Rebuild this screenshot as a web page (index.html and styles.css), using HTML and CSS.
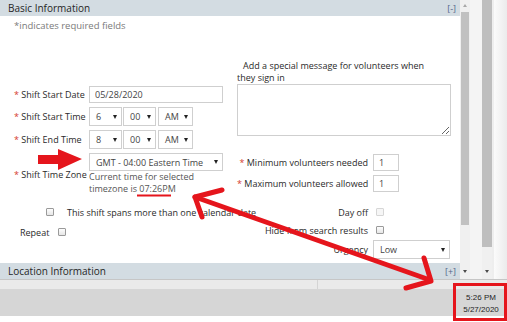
FILE: index.html
```html
<!DOCTYPE html>
<html lang="en">
<head>
    <meta charset="UTF-8">
    <title>Shift Details</title>
    <link rel="stylesheet" href="styles.css">
</head>
<body>
<div class="screen">
    <div class="window">
        <!-- Dialog panel -->
        <div class="panel">
            <div class="section-head"><span>Basic Information</span><span class="toggle">[-]</span></div>

            <div class="form-body">
                <p class="note">*indicates required fields</p>

                <div class="upper">
                    <!-- Left: date / time fields -->
                    <div class="fields">
                        <label class="lbl"><span class="req">*</span> Shift Start Date</label>
                        <input class="text wide" type="text" value="05/28/2020">

                        <label class="lbl"><span class="req">*</span> Shift Start Time</label>
                        <div class="time">
                            <div class="select small"><span>6</span><i class="caret"></i></div>
                            <div class="select small"><span>00</span><i class="caret"></i></div>
                            <div class="select small ampm"><span>AM</span><i class="caret"></i></div>
                        </div>

                        <label class="lbl"><span class="req">*</span> Shift End Time</label>
                        <div class="time">
                            <div class="select small"><span>8</span><i class="caret"></i></div>
                            <div class="select small"><span>00</span><i class="caret"></i></div>
                            <div class="select small ampm"><span>AM</span><i class="caret"></i></div>
                        </div>

                        <label class="lbl"><span class="req">*</span> Shift Time Zone</label>
                        <div class="tz">
                            <div class="select zone"><span>GMT - 04:00 Eastern Time</span><i class="caret"></i></div>
                            <div class="hint">Current time for selected<br>timezone is 07:26PM</div>
                        </div>
                    </div>

                    <!-- Right: message and volunteer counts -->
                    <div class="extras">
                        <label class="msg-label">Add a special message for volunteers when they sign in</label>
                        <textarea class="msg"></textarea>
                        <div class="counts">
                            <label><span class="req">*</span> Minimum volunteers needed</label>
                            <input class="text num" type="text" value="1">
                            <label><span class="req">*</span> Maximum volunteers allowed</label>
                            <input class="text num" type="text" value="1">
                        </div>
                    </div>
                </div>

                <div class="lower">
                    <div class="lower-left">
                        <div class="span-row"><input class="check" type="checkbox"><span>This shift spans more than one calendar date</span></div>
                        <div class="repeat-row"><span>Repeat</span><input class="check" type="checkbox"></div>
                    </div>
                    <div class="lower-right">
                        <label>Day off</label>
                        <div><input class="check off" type="checkbox" disabled></div>
                        <label>Hide from search results</label>
                        <div><input class="check" type="checkbox"></div>
                        <label>Urgency</label>
                        <div class="select urgency"><span>Low</span><i class="caret"></i></div>
                    </div>
                </div>
            </div>

            <div class="section-head"><span>Location Information</span><span class="toggle">[+]</span></div>
        </div>

        <!-- Scrollbars -->
        <div class="scrollbar inner">
            <i class="arrow up"></i>
            <div class="thumb"></div>
            <div class="track"></div>
            <i class="arrow down"></i>
        </div>
        <div class="gutter"></div>
        <div class="scrollbar outer">
            <div class="thumb"></div>
            <div class="track"></div>
            <i class="arrow down"></i>
        </div>
        <div class="edge"></div>
    </div>

    <div class="strip"><div class="strip-left"></div></div>
    <div class="taskbar">
        <div class="clock">5:26 PM<br>5/27/2020</div>
    </div>

    <!-- Red annotations drawn over the screenshot -->
    <svg class="marks" width="507" height="322" viewBox="0 0 507 322">
        <polygon points="38,155 58,155 58,149 82,159 58,170 58,164 38,164" fill="#e5151c"/>
        <line x1="137" y1="195.5" x2="171" y2="195.5" stroke="#e5151c" stroke-width="2"/>
        <g stroke="#e5151c" stroke-width="5" fill="none" stroke-linecap="round" stroke-linejoin="round">
            <line x1="195" y1="197" x2="430" y2="280"/>
            <polyline points="222,190 195,197 202,217"/>
            <polyline points="424,258 431,281 406,288"/>
        </g>
        <rect x="454.5" y="284.5" width="51" height="35" fill="none" stroke="#e5151c" stroke-width="3"/>
    </svg>
</div>
</body>
</html>
```

FILE: styles.css
```css
/* Page frame */
body {
    margin: 0;
    font-family: "Open Sans", "Liberation Sans", sans-serif;
    font-size: 9px;
    color: #2a2a2a;
    background: #fff;
}

.screen {
    position: relative;
    width: 507px;
    height: 322px;
    overflow: hidden;
}

.window {
    display: flex;
    height: 279px;
}

/* Dialog panel */
.panel {
    width: 460px;
    display: flex;
    flex-direction: column;
    background: #fff;
}

.section-head {
    display: flex;
    justify-content: space-between;
    align-items: center;
    height: 16px;
    padding: 0 4px 0 8px;
    background: #d3dce2;
    font-size: 10px;
    color: #262626;
}

.toggle {
    color: #53658a;
    font-size: 9px;
}

.form-body {
    flex: 1;
}

.note {
    margin: 4px 0 0 14px;
    line-height: 12px;
    font-size: 9.5px;
    color: #7a7a7a;
}

.req {
    color: #d43a2c;
}

/* Upper part: two columns */
.upper {
    display: flex;
    align-items: flex-start;
}

.fields {
    display: grid;
    grid-template-columns: 75px 134px;
    row-gap: 4px;
    align-items: center;
    margin-left: 14px;
    padding-top: 54px;
}

.lbl {
    white-space: nowrap;
}

.text {
    box-sizing: border-box;
    height: 17px;
    margin: 0;
    padding: 0 5px;
    border: 1px solid #cfcfcf;
    font: inherit;
    color: #444;
    background: #fff;
}

.wide {
    width: 134px;
}

.time {
    display: flex;
    gap: 1px;
}

.select {
    box-sizing: border-box;
    display: flex;
    justify-content: space-between;
    align-items: center;
    height: 19px;
    padding: 0 4px 0 6px;
    border: 1px solid #cfcfcf;
    color: #444;
    background: #fff;
}

.select.small {
    width: 33px;
}

.select.ampm {
    width: 35px;
    margin-left: 1px;
}

.select.zone {
    width: 134px;
    height: 18px;
}

.caret {
    flex-shrink: 0;
    width: 0;
    height: 0;
    border-left: 2.5px solid transparent;
    border-right: 2.5px solid transparent;
    border-top: 4px solid #222;
}

.hint {
    line-height: 12px;
    color: #555;
}

/* Right column */
.extras {
    width: 214px;
    margin-left: 14px;
    padding-top: 28px;
}

.msg-label {
    display: block;
    width: 198px;
    line-height: 12px;
    text-indent: 6px;
}

.msg {
    display: block;
    box-sizing: border-box;
    width: 214px;
    height: 52px;
    margin: 0;
    border: 1px solid #cfcfcf;
    font: inherit;
}

.counts {
    display: grid;
    grid-template-columns: 131px 26px;
    column-gap: 5px;
    row-gap: 4px;
    align-items: center;
    margin-top: 18px;
}

.counts label {
    text-align: right;
    white-space: nowrap;
}

.num {
    width: 26px;
}

/* Lower part: checkboxes and urgency */
.lower {
    display: flex;
    margin-top: 9px;
}

.lower-left {
    width: 237px;
}

.span-row {
    display: flex;
    align-items: center;
    height: 16px;
    padding-left: 46px;
    gap: 13px;
    white-space: nowrap;
}

.repeat-row {
    display: flex;
    align-items: center;
    height: 16px;
    margin-top: 4px;
    padding-left: 20px;
    gap: 9px;
}

.check {
    appearance: none;
    flex-shrink: 0;
    box-sizing: border-box;
    width: 8px;
    height: 8px;
    margin: 0;
    border: 1px solid #9a9a9a;
    border-radius: 1px;
    background: linear-gradient(#fdfdfd, #e6e6e6);
}

.check.off {
    border-color: #d6d6d6;
    background: #f6f6f6;
}

.lower-right {
    display: grid;
    grid-template-columns: 131px 77px;
    grid-template-rows: 16px 16px 19px;
    column-gap: 5px;
    row-gap: 2px;
    align-items: center;
}

.lower-right label {
    text-align: right;
    white-space: nowrap;
}

.lower-right .check {
    display: block;
    margin-left: 3px;
}

.select.urgency {
    width: 77px;
}

/* Scrollbars */
.scrollbar {
    display: flex;
    flex-direction: column;
    align-items: center;
    width: 10px;
    background: #f0f0f0;
}

.scrollbar .thumb {
    width: 8px;
    background: #c1c1c1;
}

.scrollbar .track {
    flex: 1;
}

.inner .thumb {
    height: 213px;
    margin-top: 1px;
}

.outer .thumb {
    width: 10px;
    height: 247px;
    background: #bebebe;
}

.arrow {
    width: 0;
    height: 0;
    border-left: 2px solid transparent;
    border-right: 2px solid transparent;
}

.arrow.up {
    margin-top: 4px;
    margin-bottom: 4px;
    border-bottom: 3px solid #a8a8a8;
}

.arrow.down {
    margin-bottom: 6px;
    border-top: 3px solid #4a4a4a;
}

.gutter {
    width: 12px;
    background: #f4f4f4;
}

.edge {
    flex: 1;
    border-left: 2px solid #eeeeee;
    background: linear-gradient(to right, #fbfbfb, #ebebeb);
}

/* Bottom of the screen */
.strip {
    box-sizing: border-box;
    height: 10px;
    border-top: 1px solid #c6c6c6;
    background: #eaeaea;
}

.strip-left {
    width: 317px;
    height: 100%;
    border-right: 1px solid #d4d4d4;
}

.taskbar {
    display: flex;
    justify-content: flex-end;
    height: 27px;
    background: #d6d6d6;
}

.clock {
    width: 52px;
    padding-top: 3px;
    line-height: 11.5px;
    text-align: center;
    font-family: "Liberation Sans", sans-serif;
    font-size: 8px;
    color: #1e1e1e;
}

/* Annotation layer */
.marks {
    position: absolute;
    top: 0;
    left: 0;
    pointer-events: none;
}
```
